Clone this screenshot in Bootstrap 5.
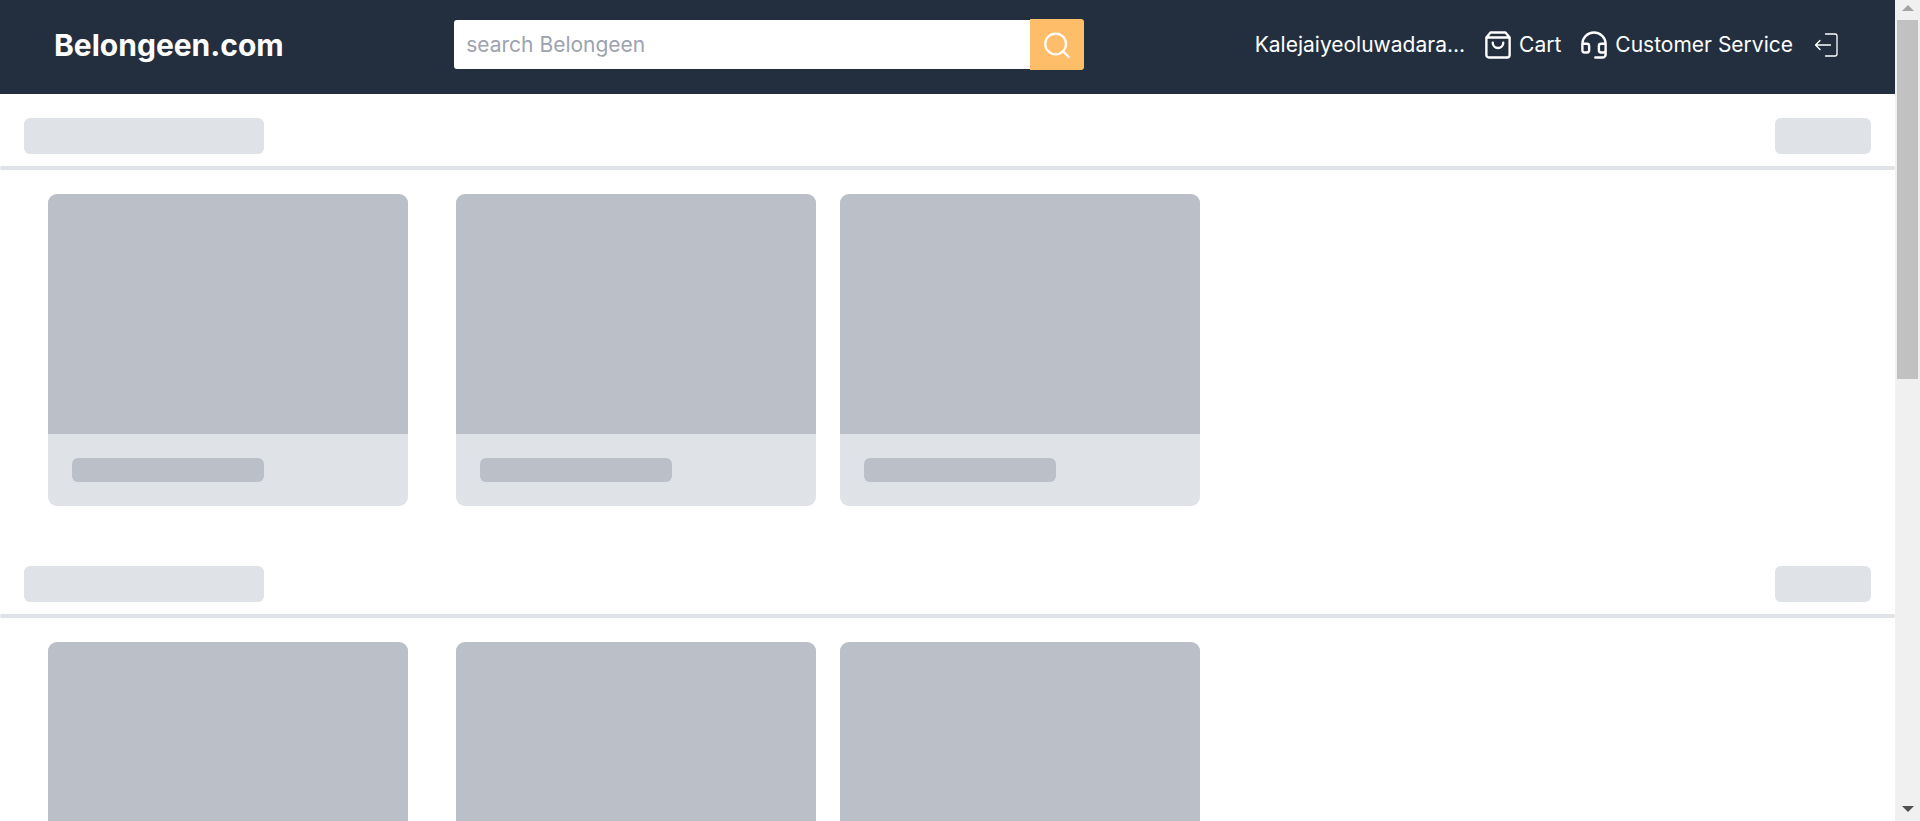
<!DOCTYPE html>
<html lang="en">
<head>
<meta charset="utf-8">
<meta name="viewport" content="width=device-width, initial-scale=1">
<title>Belongeen.com</title>
<link href="https://cdn.jsdelivr.net/npm/bootstrap@5.3.0/dist/css/bootstrap.min.css" rel="stylesheet">
<style>
  body { font-family: Inter, "Liberation Sans", sans-serif; font-size: 21px; line-height: 30px; background: #fff; }
  .page-pane { min-width: 0; }
  .site-header { background: #232f3f; padding: 19px 54px 24px; }
  .brand { font-size: 30px; line-height: 36px; }
  .search-form { flex: 0 1 630px; min-width: 0; }
  .search-input { min-width: 0; height: 49px; padding: 0 12px; font-size: 21px; border: 0; border-radius: 3px 0 0 3px; color: #232f3f; }
  .search-input::placeholder { color: #9ca3af; opacity: 1; }
  .search-button { width: 54px; height: 51px; background: #febd69; border-radius: 0 3px 3px 0; }
  .header-links { gap: 18px; }
  .header-links a, .header-links button { color: #fff; text-decoration: none; white-space: nowrap; }
  .account-name { max-width: 216px; }
  .link-icon { gap: 6px; }
  .shelf { padding-bottom: 36px; }
  .shelf-head { padding: 24px 24px 12px; }
  .bone { background: #dfe2e6; border-radius: 6px; height: 36px; }
  .bone-title { width: 240px; }
  .bone-more { width: 96px; }
  .shelf-rule { height: 4px; background: #dfe2e6; border-radius: 2px; }
  .shelf-row { padding: 24px 48px 0; gap: 24px; }
  .tile { width: 360px; flex: none; background: #dfe2e6; border-radius: 9px; overflow: hidden; }
  .tile:first-child { margin-right: 24px; }
  .tile-image { height: 240px; background: #bbbfc8; }
  .tile-text { padding: 24px; }
  .tile-line { width: 192px; height: 24px; background: #bbbfc8; border-radius: 6px; }
  .scroll-track { width: 25px; flex: none; background: #f0f0f0; }
  .scroll-end { height: 20px; flex: none; padding-bottom: 4px; }
  .scroll-thumb { width: 21px; height: 46%; background: #c1c1c1; }
</style>
</head>
<body>
<div class="d-flex vh-100 overflow-hidden">
  <div class="page-pane flex-grow-1 overflow-hidden">
    <header class="site-header d-flex align-items-center justify-content-between">
      <a href="#" class="brand fw-bold text-white text-decoration-none">Belongeen.com</a>
      <form class="search-form d-flex align-items-center" role="search">
        <input class="search-input flex-grow-1" type="search" placeholder="search Belongeen" aria-label="search Belongeen">
        <button class="search-button btn p-0 border-0 d-flex flex-shrink-0 align-items-center justify-content-center" type="button" aria-label="Search">
          <svg width="30" height="30" viewBox="0 0 24 24" fill="none" stroke="#fff" stroke-width="1.8" stroke-linecap="round"><circle cx="10.9" cy="11.1" r="8.3"/><path d="M16.9 17.1l4.5 4.5"/></svg>
        </button>
      </form>
      <nav class="header-links d-flex align-items-center" aria-label="Account">
        <a href="#" class="account-name text-truncate">Kalejaiyeoluwadara...</a>
        <a href="#" class="link-icon d-flex align-items-center">
          <svg width="30" height="30" viewBox="0 0 24 24" fill="none" stroke="#fff" stroke-width="1.9" stroke-linecap="round" stroke-linejoin="round"><path d="M6 2L2.7 6v14a2 2 0 0 0 2 2h14.6a2 2 0 0 0 2-2V6L18 2zM2.7 6h18.6M16.2 10.2a4.2 4.2 0 0 1-8.4 0"/></svg>
          Cart</a>
        <a href="#" class="link-icon d-flex align-items-center">
          <svg width="30" height="30" viewBox="0 0 24 24" fill="none" stroke="#fff" stroke-width="1.9" stroke-linecap="round" stroke-linejoin="round"><path d="M2.7 16v-5a9.3 9 0 0 1 18.6 0v8.5a2.5 2.5 0 0 1-2.5 2.5H13M2.7 11h3.6a1.8 1.8 0 0 1 1.8 1.8v3.4A1.8 1.8 0 0 1 6.3 18H4.5a1.8 1.8 0 0 1-1.8-1.8zM21.3 11h-3.6a1.8 1.8 0 0 0-1.8 1.8v3.4a1.8 1.8 0 0 0 1.8 1.8h1.8a1.8 1.8 0 0 0 1.8-1.8z"/></svg>
          Customer Service</a>
        <button type="button" class="btn p-0 border-0 d-flex" aria-label="Log out">
          <svg width="30" height="30" viewBox="0 0 30 30" fill="none" stroke="#fff" stroke-width="1.3" stroke-linecap="round" stroke-linejoin="round"><path d="M14.5 4H24a2 2 0 0 1 2 2v18a2 2 0 0 1-2 2h-9.500M19.500 15H4.500M9 10.500L4.500 15 9 19.500"/></svg>
        </button>
      </nav>
    </header>
    <main aria-busy="true">
      <section class="shelf">
        <div class="shelf-head d-flex justify-content-between"><div class="bone bone-title"></div><div class="bone bone-more"></div></div>
        <div class="shelf-rule"></div>
        <div class="shelf-row d-flex">
          <div class="tile"><div class="tile-image"></div><div class="tile-text"><div class="tile-line"></div></div></div>
          <div class="tile"><div class="tile-image"></div><div class="tile-text"><div class="tile-line"></div></div></div>
          <div class="tile"><div class="tile-image"></div><div class="tile-text"><div class="tile-line"></div></div></div>
        </div>
      </section>
      <section class="shelf">
        <div class="shelf-head d-flex justify-content-between"><div class="bone bone-title"></div><div class="bone bone-more"></div></div>
        <div class="shelf-rule"></div>
        <div class="shelf-row d-flex">
          <div class="tile"><div class="tile-image"></div><div class="tile-text"><div class="tile-line"></div></div></div>
          <div class="tile"><div class="tile-image"></div><div class="tile-text"><div class="tile-line"></div></div></div>
          <div class="tile"><div class="tile-image"></div><div class="tile-text"><div class="tile-line"></div></div></div>
        </div>
      </section>
    </main>
  </div>
  <div class="scroll-track d-flex flex-column align-items-center" aria-hidden="true">
    <div class="scroll-end d-flex align-items-center"><svg width="12" height="6" viewBox="0 0 12 6" fill="#a3a3a3"><path d="M0 6l6-6 6 6z"/></svg></div>
    <div class="flex-grow-1"><div class="scroll-thumb"></div></div>
    <div class="scroll-end d-flex align-items-center"><svg width="12" height="6" viewBox="0 0 12 6" fill="#505050"><path d="M0 0l6 6 6-6z"/></svg></div>
  </div>
</div>
<script src="https://cdn.jsdelivr.net/npm/bootstrap@5.3.0/dist/js/bootstrap.bundle.min.js"></script>
</body>
</html>
